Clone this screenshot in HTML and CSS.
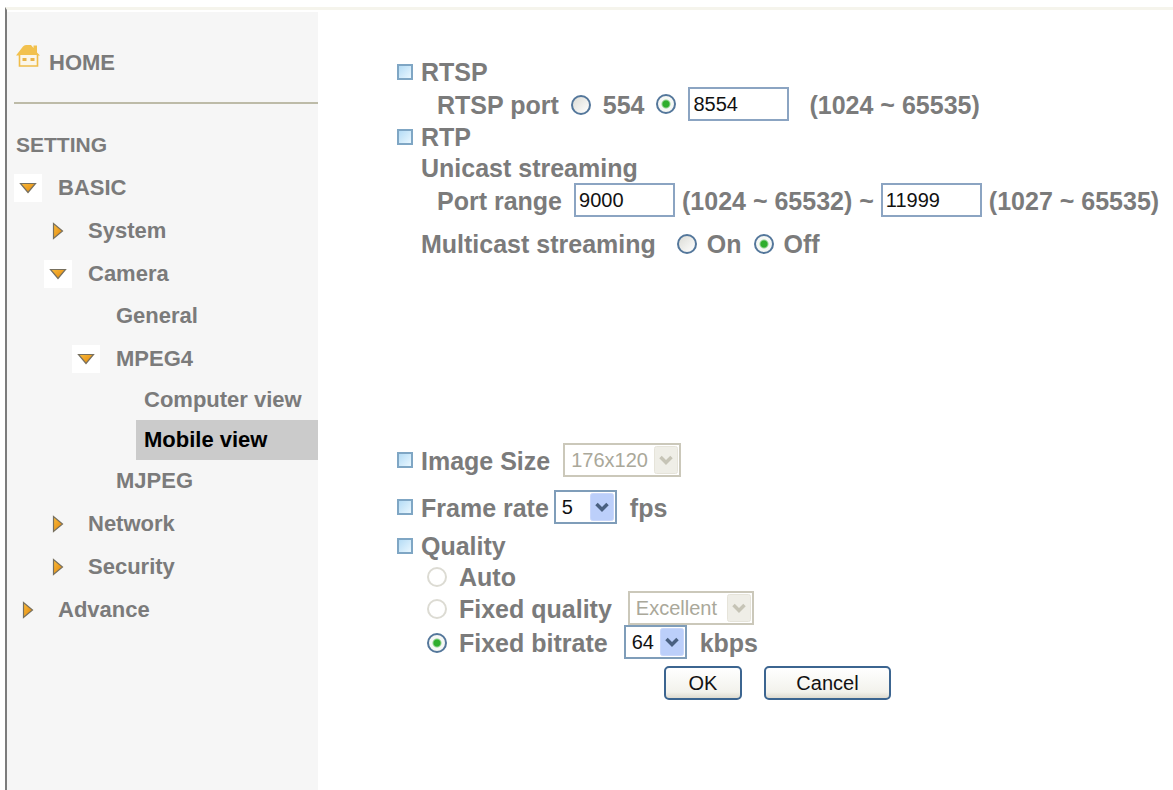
FILE: index.html
```html
<!DOCTYPE html>
<html lang="en">

<head>
    <meta charset="UTF-8">
    <meta name="viewport" content="width=device-width, initial-scale=1.0">
    <title>Mobile view</title>
    <link rel="stylesheet" href="styles.css">
</head>

<body>
    <!-- arrows used by the menu -->
    <svg class="defs" width="0" height="0" aria-hidden="true">
        <defs>
            <linearGradient id="orange" x1="0" y1="0" x2="1" y2="1">
                <stop offset="0" stop-color="#fbbc3c" />
                <stop offset="1" stop-color="#e08408" />
            </linearGradient>
            <symbol id="arrow_down" viewBox="0 0 28 28">
                <path d="M6.5 9.5H21.5L14 18.5Z" fill="url(#orange)" stroke="#77705f" stroke-width="1.2" />
            </symbol>
            <symbol id="arrow_right" viewBox="0 0 28 28">
                <path d="M9.5 6.5V21.5L18.5 14Z" fill="url(#orange)" stroke="#77705f" stroke-width="1.2" />
            </symbol>
        </defs>
    </svg>

    <div class="page">
        <nav class="sidebar">
            <a href="#" class="home">
                <svg width="24" height="24" viewBox="0 0 24 24" aria-hidden="true">
                    <path d="M0 11.5L7 2.5Q8 1 10 1H15L17.5 4V1.5H21V8.5L24 11.5Z" fill="#f2c14e" />
                    <path d="M3.5 11V22H21.5V11" fill="#fbf6e9" stroke="#f0bd4a" stroke-width="1.6" />
                    <path d="M6.5 14H10.5V17H6.5ZM14.5 14H18.5V17H14.5Z" fill="#e9b44a" />
                </svg>
                <span>HOME</span>
            </a>
            <h1 class="title">SETTING</h1>
            <ul class="menu">
                <li><a href="#" class="folder"><svg class="arrow open"><use href="#arrow_down" /></svg>BASIC</a>
                    <ul class="level1">
                        <li><a href="#" class="folder"><svg class="arrow"><use href="#arrow_right" /></svg>System</a></li>
                        <li><a href="#" class="folder"><svg class="arrow open"><use href="#arrow_down" /></svg>Camera</a>
                            <ul class="level2">
                                <li><a href="#" class="leaf">General</a></li>
                                <li><a href="#" class="folder"><svg class="arrow open"><use href="#arrow_down" /></svg>MPEG4</a>
                                    <ul class="level3">
                                        <li><a href="#" class="view">Computer view</a></li>
                                        <li><a href="#" class="view current">Mobile view</a></li>
                                    </ul>
                                </li>
                                <li><a href="#" class="leaf">MJPEG</a></li>
                            </ul>
                        </li>
                        <li><a href="#" class="folder"><svg class="arrow"><use href="#arrow_right" /></svg>Network</a></li>
                        <li><a href="#" class="folder"><svg class="arrow"><use href="#arrow_right" /></svg>Security</a></li>
                    </ul>
                </li>
                <li><a href="#" class="folder"><svg class="arrow"><use href="#arrow_right" /></svg>Advance</a></li>
            </ul>
        </nav>

        <main class="content">
            <form>
                <h2 class="row head">RTSP</h2>
                <div class="row indent2">
                    <label for="rtsp_port">RTSP port</label>
                    <label class="choice"><input type="radio" name="rtsp">554</label>
                    <input type="radio" name="rtsp" aria-label="Custom RTSP port" checked>
                    <input type="text" id="rtsp_port" class="port" value="8554">
                    <span class="range">(1024 ~ 65535)</span>
                </div>

                <h2 class="row head">RTP</h2>
                <div class="row indent1">Unicast streaming</div>
                <div class="row indent2">
                    <label for="port_from">Port range</label>
                    <input type="text" id="port_from" class="port" value="9000">
                    <label for="port_to" class="between">(1024 ~ 65532) ~</label>
                    <input type="text" id="port_to" class="port" value="11999">
                    <span class="between">(1027 ~ 65535)</span>
                </div>
                <div class="row indent1 multicast">
                    <span class="name">Multicast streaming</span>
                    <label class="choice"><input type="radio" name="multicast">On</label>
                    <label class="choice"><input type="radio" name="multicast" checked>Off</label>
                </div>

                <div class="row head image">
                    <label for="image_size">Image Size</label>
                    <select id="image_size" disabled>
                        <option>176x120</option>
                    </select>
                </div>
                <div class="row head frame">
                    <label for="frame_rate">Frame rate</label>
                    <select id="frame_rate">
                        <option>5</option>
                    </select>
                    <span class="unit">fps</span>
                </div>

                <h2 class="row head quality">Quality</h2>
                <div class="row mode">
                    <label class="choice"><input type="radio" name="quality" disabled>Auto</label>
                </div>
                <div class="row mode">
                    <label class="choice"><input type="radio" name="quality" disabled>Fixed quality</label>
                    <select id="fixed_quality" aria-label="Fixed quality" disabled>
                        <option>Excellent</option>
                    </select>
                </div>
                <div class="row mode">
                    <label class="choice"><input type="radio" name="quality" checked>Fixed bitrate</label>
                    <select id="fixed_bitrate" aria-label="Fixed bitrate">
                        <option>64</option>
                    </select>
                    <span class="unit">kbps</span>
                </div>

                <div class="buttons">
                    <button type="button" class="ok">OK</button>
                    <button type="button" class="cancel">Cancel</button>
                </div>
            </form>
        </main>
    </div>
</body>

</html>
```

FILE: styles.css
```css
*,
*::before {
    margin: 0;
    padding: 0;
    box-sizing: border-box;
}

body {
    padding: 7px 0 0 5px;
    background-color: #fff;
    color: #7b7b7b;
    font-family: "Liberation Sans", Arial, sans-serif;
    font-weight: bold;
}

ul {
    list-style: none;
}

a {
    color: inherit;
    text-decoration: none;
}

.defs {
    position: absolute;
}

.page {
    display: flex;
    min-height: calc(100vh - 7px);
    border-left: 2px solid #7c7c7c;
    border-top: 3px solid #f5f4ec;
}

/* menu */
.sidebar {
    flex: none;
    width: 311px;
    margin-top: 2px;
    background-color: #f6f6f6;
    font-size: 22px;
}

.home {
    display: flex;
    align-items: flex-end;
    gap: 9px;
    height: 92px;
    margin-left: 7px;
    padding: 0 0 26px 2px;
    border-bottom: 2px solid #bdbba8;
    line-height: 26px;
}

.home svg {
    margin-bottom: 8px;
}

.title {
    margin-top: 20px;
    padding-left: 9px;
    font-size: 21px;
    line-height: 42px;
}

.menu {
    padding-left: 7px;
}

.level1 > li > a {
    padding-left: 30px;
}

.level2 > li > a {
    padding-left: 58px;
}

.folder {
    display: flex;
    align-items: center;
    gap: 16px;
    height: 43px;
}

.arrow {
    width: 28px;
    height: 28px;
}

.open {
    background-color: #fff;
}

.level2 > li > .leaf {
    display: block;
    padding-left: 102px;
    line-height: 42px;
}

.level3 {
    padding-left: 122px;
}

.view {
    display: block;
    padding-left: 8px;
    line-height: 40px;
    white-space: nowrap;
}

.current {
    background-color: #cbcbcb;
    color: #000;
}

/* settings */
.content {
    flex: 1;
    padding: 46px 0 20px 79px;
    font-size: 25px;
    white-space: nowrap;
}

.row {
    display: flex;
    align-items: center;
    height: 34px;
    line-height: 30px;
}

.row label,
.row span {
    padding-top: 2px;
}

h2.row,
.row.indent1 {
    height: 31px;
    font-size: 25px;
}

.head::before {
    content: "";
    width: 16px;
    height: 16px;
    margin-right: 8px;
    border: 2px solid #7fa6c4;
    background: linear-gradient(135deg, #b5dcf5, #e9f7ff);
}

.indent1 {
    padding-left: 24px;
}

.indent2 {
    padding-left: 40px;
    gap: 12px;
}

.row .between {
    margin: 0 -5px;
}

.range {
    margin-left: 8px;
}

.choice {
    display: flex;
    align-items: center;
    gap: 12px;
}

.row.multicast {
    margin-top: 10px;
    gap: 12px;
}

.multicast .name {
    margin-right: 9px;
}

.multicast .choice {
    gap: 10px;
}

.image {
    margin-top: 185px;
}

.image select {
    width: 118px;
    margin-left: 13px;
}

.frame {
    margin-top: 13px;
}

.frame select {
    width: 63px;
    margin-left: 5px;
}

.unit {
    margin-left: 13px;
}

.quality {
    margin-top: 6px;
}

.mode {
    padding-left: 30px;
}

.quality + .mode {
    height: 30px;
}

#fixed_quality {
    width: 126px;
    margin-left: 16px;
}

#fixed_bitrate {
    width: 63px;
    margin-left: 16px;
}

input[type="text"],
select,
button {
    height: 34px;
    color: #111;
    font-family: inherit;
    font-size: 20px;
}

.port {
    width: 101px;
    padding: 0 3px;
    border: 2px solid #8ba4c2;
    background-color: #fff;
}

input[type="radio"] {
    appearance: none;
    flex: none;
    width: 20px;
    height: 20px;
    border: 2px solid #54779b;
    border-radius: 50%;
    background: linear-gradient(135deg, #dcdcd6, #fff);
}

input[type="radio"]:checked {
    background: radial-gradient(circle, #2fae2c 3px, #f6f8f5 5px);
}

input[type="radio"]:disabled {
    border-color: #dcdbd3;
    background: #fff;
}

select {
    appearance: none;
    padding: 0 0 0 6px;
    border: 2px solid #7f9db9;
    background: #fff url('data:image/svg+xml,<svg xmlns="http://www.w3.org/2000/svg" width="24" height="28"><rect x=".5" y=".5" width="23" height="27" rx="2" fill="%23bccffa" stroke="%23c9d7fb"/><path d="M6.500 11L12 16.500L17.500 11" fill="none" stroke="%234a6080" stroke-width="3.500"/></svg>') no-repeat right 1px center;
}

select:disabled {
    border-color: #cbc8ba;
    background-image: url('data:image/svg+xml,<svg xmlns="http://www.w3.org/2000/svg" width="24" height="28"><rect x=".5" y=".5" width="23" height="27" rx="2" fill="%23efeee7" stroke="%23e6e4da"/><path d="M6.500 11L12 16.500L17.500 11" fill="none" stroke="%23c6c4b6" stroke-width="3.500"/></svg>');
    color: #aaa89a;
    opacity: 1;
}

.buttons {
    display: flex;
    gap: 22px;
    margin-top: 7px;
    padding-left: 267px;
}

button {
    border: 2px solid #3c6590;
    border-radius: 5px;
    background: linear-gradient(#fff, #f3f2ec 80%, #dedbd0);
}

.ok {
    width: 78px;
}

.cancel {
    width: 127px;
}
```
